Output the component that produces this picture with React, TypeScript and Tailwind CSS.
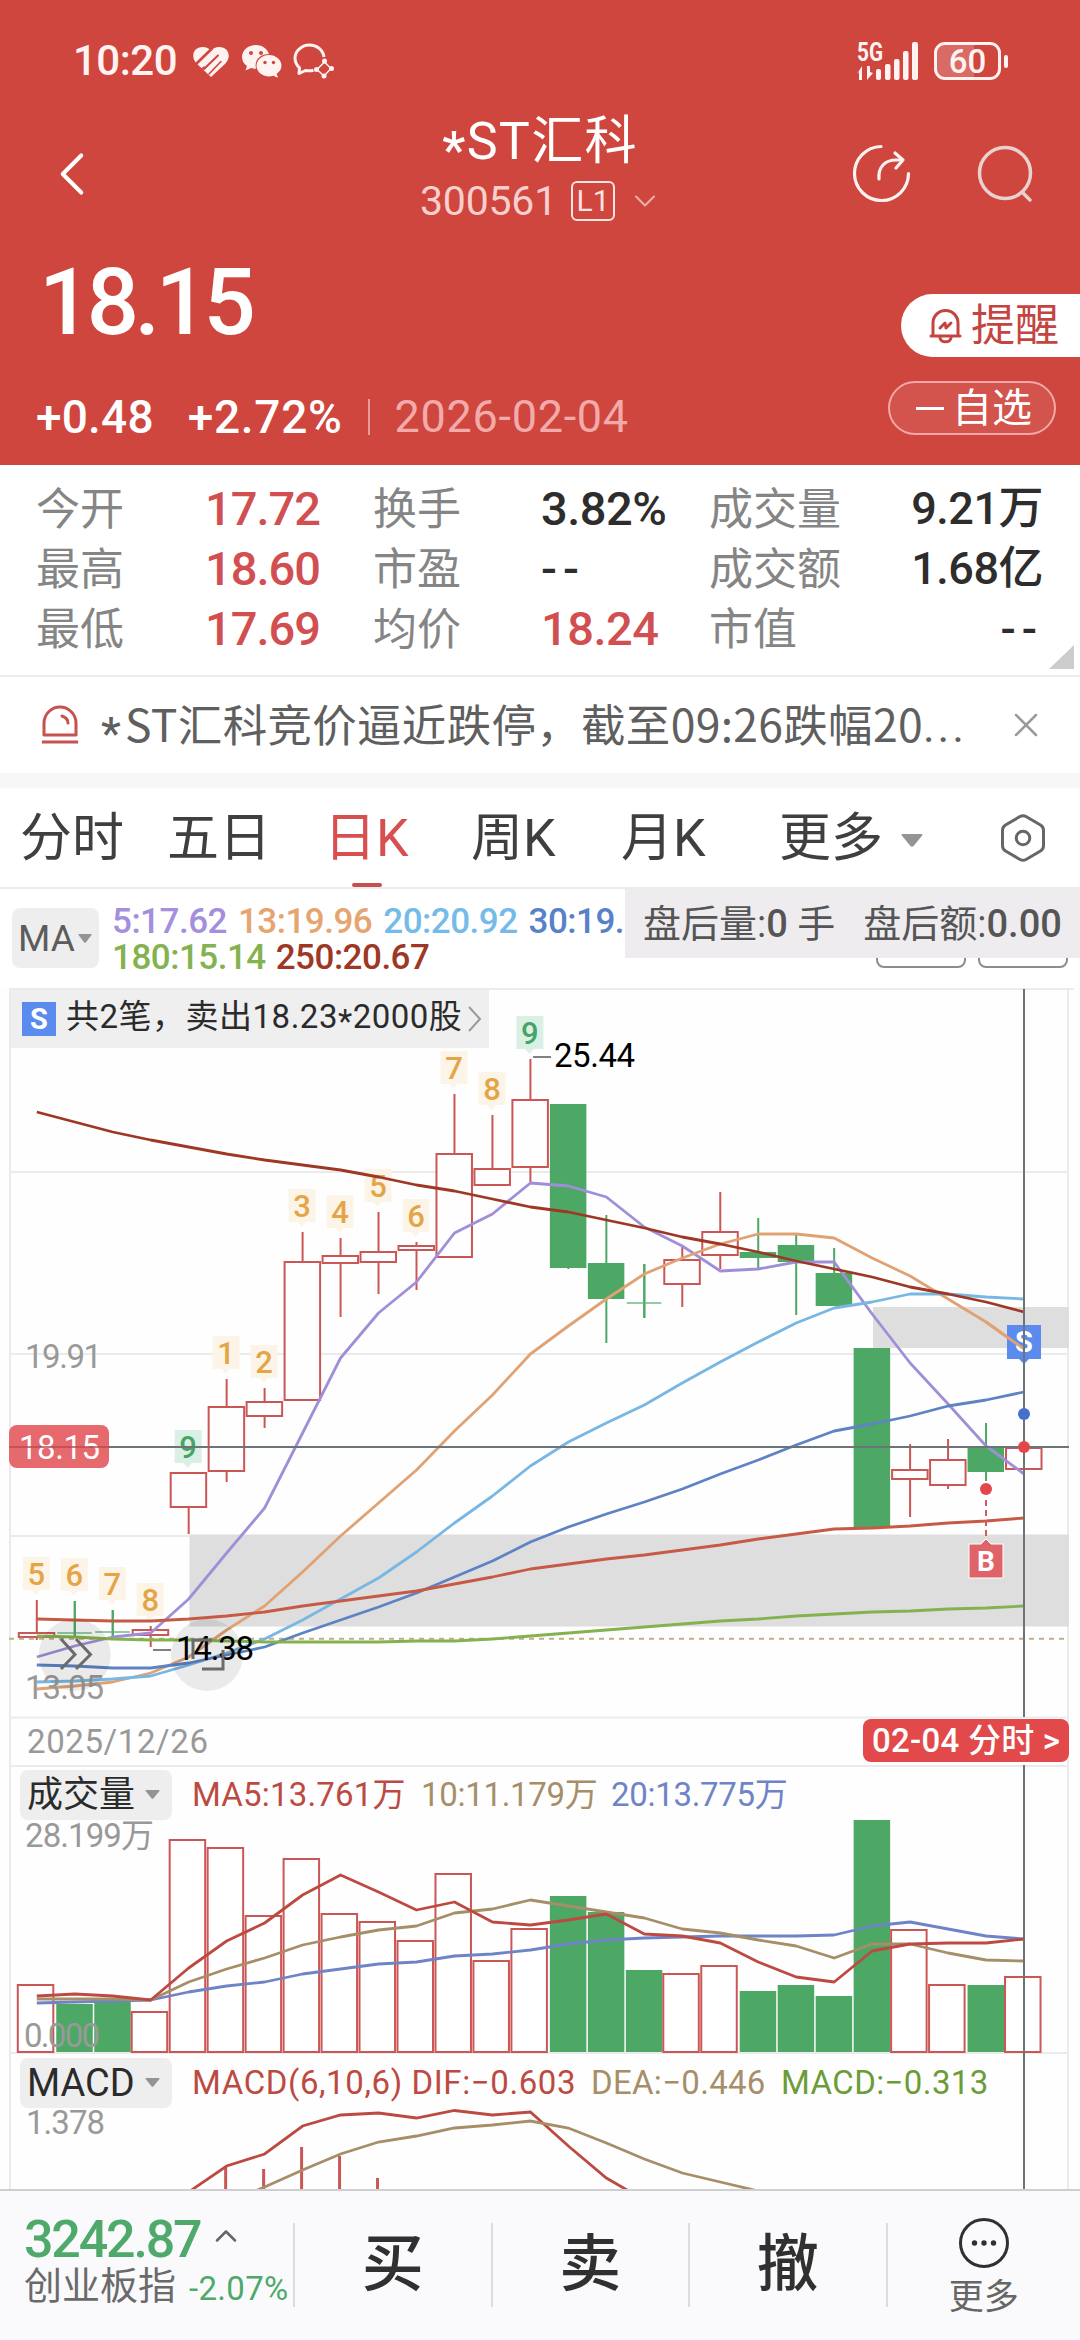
import { ChevronDown, ChevronLeft, ChevronUp, X } from "lucide-react";

type Candle = {
  up: boolean;
  high: number;
  top: number;
  bottom: number;
  low: number;
  vol: number;
  mark?: string;
  green?: boolean;
};

const candles: Candle[] = [
  { up: true, high: 1600, top: 1633, bottom: 1637, low: 1640, vol: 1985, mark: "5" },
  { up: false, high: 1601, top: 1632, bottom: 1634, low: 1637, vol: 2004, mark: "6" },
  { up: false, high: 1610, top: 1631, bottom: 1633, low: 1637, vol: 2002, mark: "7" },
  { up: true, high: 1626, top: 1630, bottom: 1635, low: 1647, vol: 2012, mark: "8" },
  { up: true, high: 1473, top: 1473, bottom: 1507, low: 1534, vol: 1840, mark: "9", green: true },
  { up: true, high: 1379, top: 1407, bottom: 1471, low: 1482, vol: 1848, mark: "1" },
  { up: true, high: 1388, top: 1402, bottom: 1416, low: 1428, vol: 1916, mark: "2" },
  { up: true, high: 1232, top: 1262, bottom: 1400, low: 1400, vol: 1859, mark: "3" },
  { up: true, high: 1238, top: 1256, bottom: 1263, low: 1317, vol: 1914, mark: "4" },
  { up: true, high: 1212, top: 1252, bottom: 1262, low: 1294, vol: 1922, mark: "5" },
  { up: true, high: 1242, top: 1246, bottom: 1250, low: 1290, vol: 1941, mark: "6" },
  { up: true, high: 1094, top: 1154, bottom: 1257, low: 1257, vol: 1874, mark: "7" },
  { up: true, high: 1115, top: 1169, bottom: 1185, low: 1185, vol: 1961, mark: "8" },
  { up: true, high: 1059, top: 1100, bottom: 1167, low: 1182, vol: 1929, mark: "9", green: true },
  { up: false, high: 1104, top: 1105, bottom: 1267, low: 1269, vol: 1896 },
  { up: false, high: 1215, top: 1264, bottom: 1298, low: 1343, vol: 1912 },
  { up: false, high: 1264, top: 1302, bottom: 1304, low: 1318, vol: 1970 },
  { up: true, high: 1247, top: 1260, bottom: 1284, low: 1307, vol: 1974 },
  { up: true, high: 1192, top: 1232, bottom: 1255, low: 1269, vol: 1966 },
  { up: false, high: 1218, top: 1253, bottom: 1257, low: 1269, vol: 1991 },
  { up: false, high: 1235, top: 1246, bottom: 1261, low: 1315, vol: 1985 },
  { up: false, high: 1248, top: 1274, bottom: 1305, low: 1306, vol: 1996 },
  { up: false, high: 1348, top: 1349, bottom: 1526, low: 1528, vol: 1820 },
  { up: true, high: 1444, top: 1470, bottom: 1479, low: 1517, vol: 1930 },
  { up: true, high: 1439, top: 1460, bottom: 1485, low: 1489, vol: 1985 },
  { up: false, high: 1423, top: 1449, bottom: 1471, low: 1481, vol: 1985 },
  { up: true, high: 1422, top: 1448, bottom: 1469, low: 1472, vol: 1977 },
];

const priceLines = [
  { color: "#a08fd8", y: [1657, 1646, 1637, 1633, 1599, 1553, 1508, 1433, 1358, 1313, 1282, 1233, 1214, 1183, 1186, 1197, 1227, 1246, 1271, 1269, 1262, 1262, 1314, 1363, 1404, 1446, 1474] },
  { color: "#e0a273", y: [1689, 1686, 1682, 1673, 1657, 1630, 1606, 1572, 1536, 1503, 1470, 1431, 1395, 1354, 1326, 1299, 1274, 1258, 1244, 1234, 1234, 1238, 1258, 1276, 1299, 1322, 1349] },
  { color: "#78b7e3", y: [1682, 1681, 1679, 1676, 1665, 1653, 1639, 1620, 1599, 1578, 1552, 1523, 1496, 1466, 1442, 1423, 1405, 1383, 1362, 1342, 1323, 1308, 1302, 1294, 1294, 1297, 1299] },
  { color: "#5d83c4", y: [1665, 1666, 1668, 1668, 1663, 1655, 1647, 1633, 1620, 1607, 1593, 1577, 1561, 1542, 1527, 1514, 1502, 1489, 1474, 1460, 1445, 1431, 1424, 1416, 1406, 1400, 1392] },
  { color: "#c75a44", y: [1619, 1620, 1621, 1621, 1619, 1616, 1612, 1606, 1601, 1596, 1591, 1584, 1577, 1569, 1564, 1559, 1555, 1550, 1545, 1539, 1534, 1529, 1528, 1526, 1523, 1521, 1518] },
  { color: "#84b24f", y: [1636, 1637, 1639, 1640, 1640, 1641, 1642, 1642, 1642, 1642, 1641, 1641, 1639, 1636, 1633, 1630, 1627, 1624, 1621, 1619, 1616, 1614, 1612, 1611, 1609, 1608, 1606] },
  { color: "#9e3825", y: [1112, 1122, 1132, 1140, 1147, 1154, 1160, 1165, 1170, 1177, 1185, 1191, 1199, 1207, 1212, 1220, 1228, 1237, 1244, 1252, 1261, 1269, 1277, 1287, 1294, 1302, 1312] },
];

const volumeLines = [
  { color: "#6f84c6", y: [2003, 2002, 2001, 2000, 1992, 1986, 1982, 1974, 1969, 1964, 1962, 1956, 1954, 1950, 1944, 1940, 1938, 1937, 1936, 1936, 1936, 1935, 1926, 1922, 1929, 1936, 1939] },
  { color: "#a68f68", y: [1999, 1999, 1999, 2000, 1982, 1969, 1958, 1945, 1937, 1930, 1926, 1913, 1909, 1900, 1906, 1912, 1918, 1929, 1933, 1940, 1946, 1958, 1944, 1944, 1953, 1960, 1961] },
  { color: "#bd4a42", y: [1996, 1994, 1996, 2000, 1968, 1941, 1923, 1895, 1875, 1892, 1910, 1902, 1922, 1925, 1920, 1914, 1934, 1936, 1943, 1962, 1977, 1982, 1951, 1944, 1943, 1943, 1939] },
];

const RED = "#cb5656";
const GREEN = "#4da865";

const cx = (i: number) => 36.8 + i * 37.97;
const points = (ys: number[], start = 0) => ys.map((y, i) => `${cx(i + start)},${y}`).join(" ");

type LabelProps = {
  x: number;
  y: number;
  w: number;
  size?: number;
  fill?: string;
  children: string;
};

function Label({ x, y, w, size = 33, fill = "#999999", children }: LabelProps) {
  return (
    <text x={x} y={y} fontSize={size} fill={fill} textLength={w} lengthAdjust="spacing">
      {children}
    </text>
  );
}

function Triangle({ className }: { className: string }) {
  return (
    <svg viewBox="0 0 14 9" className={className} fill="#949494" preserveAspectRatio="none">
      <path d="M1 0h12q1 0 .5 1L8 8.300q-1 1-2 0L.5 1Q0 0 1 0z" />
    </svg>
  );
}

function StatusBar() {
  return (
    <div className="flex h-[82px] items-center pt-10 pr-[72px] pl-[73px] text-[#fff3f2]">
      <span className="w-[106px] text-[42px] leading-none font-medium tracking-[-0.5px]">10:20</span>
      <svg viewBox="0 0 36 31" className="ml-[14px] h-[31px] w-9">
        <path d="M18 31L3.500 17.500C-3 10 1 1 9.500 1c4 0 6.500 1.500 8.500 4 2-2.500 4.500-4 8.500-4C35 1 39 10 32.500 17.500z" fill="currentColor" />
        <g stroke="#cf463e" fill="none" strokeLinecap="round">
          <path d="M2 19L18.500 3" strokeWidth="2.600" />
          <path d="M11 23L25 9.500" strokeWidth="2" />
          <path d="M8 24L11 21M16 28L28 15.500" strokeWidth="1.600" />
        </g>
      </svg>
      <svg viewBox="0 0 40 34" className="ml-[13px] h-[34px] w-10" fill="currentColor">
        <path d="M14 1C6 1 0 6.500 0 13c0 4 2 7 5 9l-1.500 4.500L9 24c1.500.5 3 .8 5 .8C12 16 18 10 27 10 25.500 5 20.500 1 14 1z" />
        <path d="M27 11c-7 0-12.500 5-12.500 10.800S20 32.500 27 32.500c1.500 0 3-.2 4.300-.7l4.700 2-1.300-4c3-2 4.800-5 4.800-8C39.500 16 34 11 27 11z" />
        <g fill="#cf463e">
          <circle cx="9" cy="9" r="2" />
          <circle cx="19" cy="9" r="2" />
          <circle cx="23" cy="18.500" r="1.700" />
          <circle cx="31.500" cy="18.500" r="1.700" />
        </g>
      </svg>
      <svg viewBox="0 0 42 36" className="ml-[10px] h-9 w-[42px]" fill="none" stroke="currentColor" strokeWidth="3">
        <path d="M32 14C31 7 25 2 17.500 2S3 8 3 15c0 4.500 2 7.500 4.500 9.800L7 30.500l6.500-3c3 .6 5 .6 8-.3" strokeLinejoin="round" />
        <path d="M32.500 19L25 26.500L32 33L39 25.500Z" strokeWidth="1.500" />
        <g fill="currentColor" stroke="none">
          <circle cx="32.500" cy="18" r="2.500" />
          <circle cx="24.500" cy="26.500" r="2.500" />
          <circle cx="39.500" cy="25.500" r="2.500" />
          <circle cx="32" cy="33" r="2.500" />
        </g>
      </svg>

      <svg viewBox="0 0 64 40" className="ml-auto h-10 w-16 overflow-visible" fill="currentColor">
        <text x="0" y="20" fontSize="25" fontWeight="700" textLength="26" lengthAdjust="spacingAndGlyphs">
          5G
        </text>
        <path d="M5 25v14H2V31l-2 2zM10 25v14l6-7-3-1V25z" />
        <rect x="19" y="28" width="5" height="11" rx="2" />
        <rect x="28" y="23" width="5.500" height="16" rx="2" />
        <rect x="37" y="18" width="5.500" height="21" rx="2" />
        <rect x="46" y="10" width="5.500" height="29" rx="2" />
        <rect x="55" y="1" width="6" height="38" rx="2" />
      </svg>
      <div className="ml-[13px] flex h-[38px] w-[67px] items-center justify-center rounded-[11px] border-3 border-current bg-linear-to-r from-white/20 from-60% to-transparent to-60% text-[33px] leading-none font-medium">
        60
      </div>
      <div className="ml-[3px] h-[13px] w-1 rounded-full bg-current" />
    </div>
  );
}

function Header() {
  return (
    <header className="h-[465px] bg-[#cf463e] text-white">
      <StatusBar />

      <div className="mt-[29px] grid h-28 grid-cols-3">
        <ChevronLeft className="mt-[25px] ml-[35px] h-[76px] w-[74px]" strokeWidth={1.3} />
        <div className="flex flex-col items-center">
          <h1 className="h-14 pt-[3px] text-[52px] leading-[56px] tracking-[1.300px] whitespace-nowrap">
            <span className="relative top-[9px] font-medium">*</span>ST汇科
          </h1>
          <div className="mt-3 flex h-11 items-center">
            <span className="text-[41px] leading-none tracking-[-0.200px] text-[#f8cfcc]">300561</span>
            <span className="ml-[14px] flex h-10 w-11 items-center justify-center rounded-md border-2 border-[#fbe3e1] text-[30px] leading-none text-[#fbe3e1]">
              L1
            </span>
            <ChevronDown className="-mr-[3px] ml-[12px] h-9 w-9 text-[#eeb0ac]" strokeWidth={1.4} />
          </div>
        </div>
        <div className="flex justify-end gap-[62px] pt-[32px] pr-[44px]">
          <svg viewBox="0 0 62 62" className="h-[62px] w-[62px]" fill="none" stroke="#fff3f2" strokeWidth="3.200" strokeLinecap="round" strokeLinejoin="round">
            <path d="M31 3.500A27 27 0 1 0 58.500 30.500" />
            <path d="M29 36c-1-12 6-19 17-19h6" />
            <path d="M45 10l8 7-7 8" />
          </svg>
          <svg viewBox="0 0 62 62" className="h-[62px] w-[62px]" fill="none" stroke="#ead0cf" strokeWidth="3.500" strokeLinecap="round">
            <circle cx="31" cy="30" r="25.500" />
            <path d="M48 49l8 8" />
          </svg>
        </div>
      </div>

      <div className="flex h-[156px] items-center justify-between pl-[39px]">
        <span className="pt-1 text-[92px] leading-none font-medium tracking-[-4.500px]">18.15</span>
        <div className="mt-[49px] flex h-[63px] w-[179px] items-center rounded-l-full bg-white pl-[28px] text-[#c4453f]">
          <svg viewBox="0 0 33 36" className="h-9 w-[33px]" fill="none" stroke="currentColor" strokeWidth="3" strokeLinejoin="round" strokeLinecap="round">
            <path d="M4 27V15a12.500 12.500 0 0 1 25 0v12M2 28h29" />
            <path d="M11 30c1 5 10 5 11 0" />
            <path d="M11 20l5-5 1 5 5-5" />
          </svg>
          <span className="ml-[9px] text-[44px] leading-none">提醒</span>
        </div>
      </div>

      <div className="flex h-[86px] items-center pr-6 pb-[11px] pl-9 text-[46px] leading-none">
        <span className="font-medium tracking-[0.200px]">+0.48</span>
        <span className="ml-[34px] font-medium tracking-[0.700px]">+2.72%</span>
        <span className="ml-[25px] h-9 w-0.5 bg-[#e69c98]" />
        <span className="ml-[25px] text-[45px] tracking-[0.700px] text-[#f2abaa]">2026-02-04</span>
        <button className="mt-0.5 ml-auto flex h-[54px] w-[168px] items-center self-start rounded-full border-2 border-[#f3a9a6] bg-white/8 pl-[26px]">
          <span className="h-[3px] w-7 bg-white" />
          <span className="ml-2 pt-0.5 text-[40px] leading-none">自选</span>
        </button>
      </div>
    </header>
  );
}

const stats = [
  ["今开", "17.72", true, "换手", "3.82%", false, "成交量", "9.21万"],
  ["最高", "18.60", true, "市盈", "--", false, "成交额", "1.68亿"],
  ["最低", "17.69", true, "均价", "18.24", true, "市值", "--"],
] as const;

function Value({ text }: { text: string }) {
  if (text === "--") {
    return <span className="tracking-[6px]">--</span>;
  }
  return <>{text}</>;
}

function Stats() {
  return (
    <section className="relative h-[212px] border-b-2 border-[#ededed] bg-white pt-[13px] pl-9">
      {stats.map((row) => (
        <div key={row[0]} className="flex h-[60px] w-[1007px] items-center text-[44px] leading-none whitespace-nowrap text-[#858585]">
          <span className="w-[169px] pt-1">{row[0]}</span>
          <span className="w-[168px] text-[47px] font-medium tracking-[-1px] text-[#d14f50]">{row[1]}</span>
          <span className="w-[168px] pt-1">{row[3]}</span>
          <span className={"w-[168px] text-[47px] font-medium tracking-[-0.500px] " + (row[5] ? "text-[#d14f50]" : "text-[#2d2d2d]")}>
            <Value text={row[4]} />
          </span>
          <span className="pt-1">{row[6]}</span>
          <span className="ml-auto text-[45px] font-medium tracking-[-0.500px] text-[#2d2d2d]">
            <Value text={row[7]} />
          </span>
        </div>
      ))}
      <svg viewBox="0 0 25 24" className="absolute right-[6px] bottom-[6px] h-6 w-[25px]">
        <path d="M25 0v24H0z" fill="#cccccc" />
      </svg>
    </section>
  );
}

function NewsBar() {
  return (
    <div className="flex h-24 items-center bg-white pr-[34px] pl-[41px] text-[#5f5f5f]">
      <svg viewBox="0 0 38 40" className="h-10 w-[38px]" fill="none" stroke="#c8524f" strokeWidth="3">
        <path d="M3 30V18a16 16 0 0 1 32 0v12z" strokeLinejoin="round" />
        <path d="M1 37h36" />
        <path d="M21 11q6 2 6 7" strokeLinecap="round" />
      </svg>
      <span className="ml-[22px] text-[44.500px] leading-none tracking-[0.300px] whitespace-nowrap">
        <span className="relative top-[7px] mr-1 font-medium">*</span>
        <span className="font-['Noto_Sans_CJK_SC',sans-serif]">ST汇科竞价逼近跌停，截至09:26跌幅20</span>
        <span className="tracking-[3px]">...</span>
      </span>
      <X className="ml-auto h-10 w-10 text-[#9a9a9a]" strokeWidth={1.500} />
    </div>
  );
}

const tabs = [
  { name: "分时", width: "w-[147px]" },
  { name: "五日", width: "w-[157px]" },
  { name: "日K", width: "w-[147px]" },
  { name: "周K", width: "w-[150px]" },
  { name: "月K", width: "w-[158px]" },
];

function Tabs() {
  return (
    <nav className="flex h-[101px] items-center border-b-2 border-[#ebebeb] bg-white pl-5 text-[52px] leading-none text-[#3f3f3f]">
      {tabs.map((tab) =>
        tab.name === "日K" ? (
          <div key={tab.name} className={"relative flex h-full items-center pt-0.5 text-[#d84f50] " + tab.width}>
            {tab.name}
            <span className="absolute bottom-0 left-[28px] h-1 w-[30px] rounded-full bg-[#c4504f]" />
          </div>
        ) : (
          <div key={tab.name} className={"pt-0.5 " + tab.width}>
            {tab.name}
          </div>
        )
      )}
      <div className="flex items-center pt-0.5">
        更多
        <Triangle className="mt-1 ml-[18px] h-[13px] w-[22px]" />
      </div>
      <svg viewBox="0 0 46 50" className="mr-[34px] ml-auto h-[50px] w-[46px]" fill="none" stroke="#666666" strokeWidth="3">
        <path d="M20 3.500q3-1.700 6 0l14.500 8.500q3 1.800 3 5.200v15.600q0 3.400-3 5.200L26 46.500q-3 1.700-6 0L5.500 38q-3-1.800-3-5.200V17.200q0-3.400 3-5.200z" />
        <circle cx="23" cy="25" r="6.800" />
      </svg>
    </nav>
  );
}

function MaLegend() {
  return (
    <div className="relative flex h-[99px] items-start overflow-hidden bg-white pt-[19px] pl-3">
      <div className="flex h-[60px] w-[87px] items-center rounded-lg bg-[#eeeeee] pl-[6px] text-[37px] leading-none text-[#5c5c5c]">
        MA
        <Triangle className="ml-[3px] h-[9px] w-[14px]" />
      </div>
      <div className="-mt-1 ml-[13px] text-[35px] leading-9 font-medium tracking-[-0.500px] whitespace-nowrap">
        <div className="flex gap-[11px]">
          <span className="text-[#a38fdc]">5:17.62</span>
          <span className="text-[#e6a46f]">13:19.96</span>
          <span className="text-[#75bbe8]">20:20.92</span>
          <span className="text-[#5781c8]">30:19.</span>
        </div>
        <div className="flex gap-[10px]">
          <span className="text-[#84b24f]">180:15.14</span>
          <span className="text-[#9e3825]">250:20.67</span>
        </div>
      </div>
      <div className="absolute top-[30px] right-3 flex gap-3">
        <div className="h-[49px] w-[90px] rounded-lg border-2 border-[#8c8c8c]" />
        <div className="h-[49px] w-[90px] rounded-lg border-2 border-[#8c8c8c]" />
      </div>
      <div className="absolute top-0 right-0 flex h-[69px] w-[455px] items-center bg-[#eeecee] pl-[18px] text-[38px] leading-none whitespace-nowrap text-[#555555]">
        <span>
          盘后量:<b className="font-medium">0</b> 手
        </span>
        <span className="ml-7">
          盘后额:<b className="font-medium">0.00</b>
        </span>
      </div>
    </div>
  );
}

function PriceChart() {
  return (
    <svg viewBox="11 988 1056 777" className="block h-[777px] w-full overflow-visible">
      {/* grid */}
      <g stroke="#ebebeb" strokeWidth="2">
        <path d="M9 989H1074M11 1172H1068M11 1354H1068M11 1536H1068M11 1717.500H1068" />
      </g>
      <rect x="873" y="1307" width="196" height="41" fill="#dedede" />
      <rect x="189.500" y="1534.500" width="879.500" height="92" fill="#dedede" />

      <Label x={25} y={1368} w={77}>19.91</Label>

      {candles.map((c, i) => {
        const x = cx(i);
        const color = c.up ? RED : GREEN;
        return (
          <g key={i} stroke={color} strokeWidth="2">
            <path d={`M${x} ${c.high}V${c.top}M${x} ${c.bottom}V${c.low}`} />
            <rect
              x={x - (c.up ? 18 : 17.500)}
              y={c.top}
              width={c.up ? 35.500 : 34.500}
              height={c.bottom - c.top}
              fill={c.up ? "#fefefe" : GREEN}
              strokeWidth={c.bottom - c.top <= 2 ? 0 : 2}
              opacity={c.bottom - c.top <= 2 ? 0.6 : 1}
            />
          </g>
        );
      })}
      <path d={`M${cx(1)} 1601V1637M${cx(2)} 1610V1637M${cx(16)} 1264V1318`} stroke={GREEN} strokeWidth="2" />

      {/* sequence marks above the highs */}
      {candles.map((c, i) =>
        c.mark ? (
          <g key={i}>
            <path
              d={`M${cx(i) - 14} ${c.high - 43}h27v33h-10l-4 5l-4 -5h-9z`}
              fill={c.green ? "#dbf0e4" : "#fdf4e8"}
            />
            <text x={cx(i) - 0.500} y={c.high - 15} fontSize="31" fontWeight="500" textAnchor="middle" fill={c.green ? "#45a566" : "#e4a548"}>
              {c.mark}
            </text>
          </g>
        ) : null
      )}

      <path d="M9 1638.700H1069" stroke="#c2ad85" strokeWidth="2" strokeDasharray="5 5" />

      {priceLines.map((line) => (
        <polyline key={line.color} points={points(line.y)} fill="none" stroke={line.color} strokeWidth="2.800" strokeLinejoin="round" />
      ))}

      <Label x={25} y={1699} w={79}>13.05</Label>
      <Label x={27} y={1753} w={181}>2025/12/26</Label>

      {/* high and low of the visible range */}
      <path d="M533 1057H551M153 1650H171" stroke="#808080" strokeWidth="2" />
      <Label x={554} y={1067} w={81} fill="#000000">25.44</Label>
      <Label x={176} y={1660} w={78} fill="#000000">14.38</Label>

      {/* round buttons */}
      <g fill="none" stroke="#6b6b6b" strokeWidth="3">
        <circle cx="74.700" cy="1655" r="36" fill="#000000" fillOpacity="0.080" stroke="none" />
        <circle cx="207" cy="1655" r="36" fill="#000000" fillOpacity="0.080" stroke="none" />
        <path d="M61 1639l14 15.500L61 1669M76 1639l14.500 15.500L76 1669" />
        <path d="M193 1659V1640H212M223 1650V1669H202" />
      </g>

      {/* trade markers */}
      <path d="M1007 1325h34v34h-12l-5 5l-5-5h-12z" fill="#5b8bef" />
      <text x="1024" y="1352" fontSize="29" fontWeight="700" textAnchor="middle" fill="#ffffff">S</text>
      <path d={`M${cx(25)} 1322L${cx(26)} 1349`} stroke="#e0a273" strokeWidth="2.800" />
      <path d="M986 1500V1538" stroke="#d05a60" strokeWidth="2" strokeDasharray="6 4" />
      <path d="M969 1544h12l5-5l5 5h12v34h-34z" fill="#df6469" stroke="#ffffff" strokeWidth="1" />
      <text x="986" y="1571" fontSize="28" fontWeight="700" textAnchor="middle" fill="#ffffff">B</text>

      {/* crosshair */}
      <rect x="9" y="1425" width="100" height="43" rx="8" fill="#e6696e" />
      <Label x={19} y={1459} w={81} fill="#ffffff">18.15</Label>
      <path d="M109 1447H1069" stroke="#6b7579" strokeWidth="2" />
      <path d="M9 1447H109" stroke="#b74d52" strokeWidth="1.500" />
      <path d="M1024 989V1717" stroke="#6b7579" strokeWidth="2" />
      <circle cx="1024" cy="1414" r="6" fill="#3f70dc" />
      <circle cx="1024" cy="1447" r="6" fill="#e2474b" />
      <circle cx="986" cy="1489" r="6" fill="#e2474b" />
      <path d="M1024 1408V1420" stroke="#6b7579" strokeWidth="1" />

      <rect x="863" y="1719" width="206" height="43" rx="8" fill="#e1494b" />
      <text x="872" y="1752" fontSize="33" fontWeight="500" fill="#ffffff" textLength="188" lengthAdjust="spacing">
        {"02-04 分时 >"}
      </text>
    </svg>
  );
}

function TradeTip() {
  return (
    <div className="absolute top-0.5 left-0 flex h-[58px] w-[478px] items-center bg-[#efefef] pl-[11px] text-[#2b2b2b]">
      <span className="flex h-[34px] w-[34px] items-center justify-center bg-[#5b8bef] text-[29px] leading-none font-bold text-white">
        S
      </span>
      <span className="-mt-[6px] ml-[10px] text-[33px] leading-none tracking-[0.500px] whitespace-nowrap">
        共2笔，卖出18.23<span className="relative top-[5px]">*</span>2000股
      </span>
      <svg viewBox="0 0 14 26" className="ml-[6px] h-[26px] w-[14px] shrink-0" fill="none" stroke="#999999" strokeWidth="2">
        <path d="M1 1l11 12L1 25" />
      </svg>
    </div>
  );
}

function VolumePanel() {
  return (
    <section className="border-t-2 border-[#ebebeb]">
      <div className="flex h-[53px] items-center pt-[2px] pl-[9px] text-[33px] leading-none">
        <div className="flex h-[50px] w-[152px] items-center rounded-lg bg-[#eeeeee] pl-[7px] text-[36px] font-normal text-[#2b2b2b]">
          成交量
          <Triangle className="ml-[10px] h-[9px] w-[15px]" />
        </div>
        <span className="ml-[20px] w-[229px] tracking-[0.200px] text-[#bd4a42]">MA5:13.761万</span>
        <span className="w-[190px] tracking-[-0.300px] text-[#a68f68]">10:11.179万</span>
        <span className="tracking-[-0.300px] text-[#6f84c6]">20:13.775万</span>
      </div>
      <svg viewBox="11 1820 1056 235" className="block h-[235px] w-full overflow-visible">
        <path d="M11 2053H1067" stroke="#ebebeb" strokeWidth="2" />
        {candles.map((c, i) => (
          <rect
            key={i}
            x={cx(i) - (c.up ? 19 : 18.500)}
            y={c.vol}
            width={c.up ? 35.500 : 36.500}
            height={2052 - c.vol}
            fill={c.up ? "#ffffff" : GREEN}
            stroke={c.up ? RED : "none"}
            strokeWidth="2"
          />
        ))}
        {volumeLines.map((line) => (
          <polyline key={line.color} points={points(line.y)} fill="none" stroke={line.color} strokeWidth="2.800" strokeLinejoin="round" />
        ))}
        <Label x={25} y={1847} w={129}>28.199万</Label>
        <Label x={24} y={2047} w={76}>0.000</Label>
      </svg>
    </section>
  );
}

function MacdPanel() {
  const bars = [2166, 2169, 2147, 2156, 2178];
  return (
    <section>
      <div className="flex h-[55px] items-center pl-[9px] text-[33px] leading-none whitespace-nowrap">
        <div className="flex h-[50px] w-[152px] items-center rounded-lg bg-[#eeeeee] pl-[7px] text-[38px] font-normal text-[#2b2b2b]">
          MACD
          <Triangle className="ml-[10px] h-[9px] w-[15px]" />
        </div>
        <span className="ml-[20px] w-[399px] tracking-[0.600px] text-[#bd4a42]">MACD(6,10,6) DIF:−0.603</span>
        <span className="w-[190px] tracking-[0.300px] text-[#a68f68]">DEA:−0.446</span>
        <span className="tracking-[0.400px] text-[#6c9c37]">MACD:−0.313</span>
      </div>
      <svg viewBox="11 2100 1056 89" className="-mt-[10px] block h-[89px] w-full">
        {bars.map((y, i) => (
          <path key={i} d={`M${cx(i + 5) - 1} ${y}V2190`} stroke="#cb5656" strokeWidth="3" />
        ))}
        <polyline
          points={points([2192, 2166, 2154, 2126, 2115, 2113, 2118, 2110.500, 2115, 2112, 2146, 2178, 2200], 4)}
          fill="none"
          stroke="#bd4a42"
          strokeWidth="2.800"
        />
        <polyline
          points={points([2203, 2187, 2170, 2154, 2142, 2136, 2128, 2125, 2121, 2128, 2143, 2159, 2173, 2182, 2191], 5)}
          fill="none"
          stroke="#a68f68"
          strokeWidth="2.800"
        />
        <Label x={26} y={2134} w={79}>1.378</Label>
      </svg>
    </section>
  );
}

function BottomBar() {
  return (
    <footer className="flex h-[151px] border-t-2 border-[#cfcfd1] bg-[#fafafc] leading-none">
      <div className="flex w-[293px] flex-col pt-[23px] pl-6">
        <div className="flex items-center text-[52px] font-medium tracking-[-2.200px] text-[#4ea96b]">
          3242.87
          <ChevronUp className="-mt-2 ml-[8px] h-9 w-9 text-[#666666]" strokeWidth={1.700} />
        </div>
        <div className="mt-px flex items-center whitespace-nowrap">
          <span className="text-[38px] text-[#6a6a6a]">创业板指</span>
          <span className="mt-1 ml-[13px] text-[33px] tracking-[0.300px] text-[#4ea96b]">-2.07%</span>
        </div>
      </div>
      {["买", "卖", "撤"].map((name) => (
        <button key={name} className="mt-8 flex h-[84px] w-[197.500px] items-center justify-center border-l-2 border-[#dcdcde] text-[62px] font-medium text-[#303030]">
          {name}
        </button>
      ))}
      <button className="mt-8 flex h-[84px] flex-1 flex-col items-center border-l-2 border-[#dcdcde] text-[35px] text-[#666666]">
        <svg viewBox="0 0 52 52" className="-mt-[6px] h-[52px] w-[52px] shrink-0" fill="#303030">
          <circle cx="26" cy="26" r="23.500" fill="none" stroke="#303030" strokeWidth="3" />
          <circle cx="16.500" cy="26" r="2.700" />
          <circle cx="26" cy="26" r="2.700" />
          <circle cx="35.500" cy="26" r="2.700" />
        </svg>
        <span className="mt-[11px]">更多</span>
      </button>
    </footer>
  );
}

export default function App() {
  return (
    <div className="flex h-[2340px] w-[1080px] flex-col overflow-hidden bg-[#fefefe] font-[Roboto,'Noto_Sans_CJK_SC',sans-serif]">
      <Header />
      <Stats />
      <NewsBar />
      <div className="h-[15px] bg-[#f7f7f8]" />
      <Tabs />
      <MaLegend />
      <main className="relative ml-[9px] h-[1201px] w-[1060px] border-x-2 border-[#ebebeb]">
        <PriceChart />
        <TradeTip />
        <VolumePanel />
        <MacdPanel />
        {/* crosshair over the lower panels */}
        <div className="absolute top-[777px] bottom-0 left-[1012px] w-0.5 bg-[#6b7579]" />
      </main>
      <BottomBar />
    </div>
  );
}
